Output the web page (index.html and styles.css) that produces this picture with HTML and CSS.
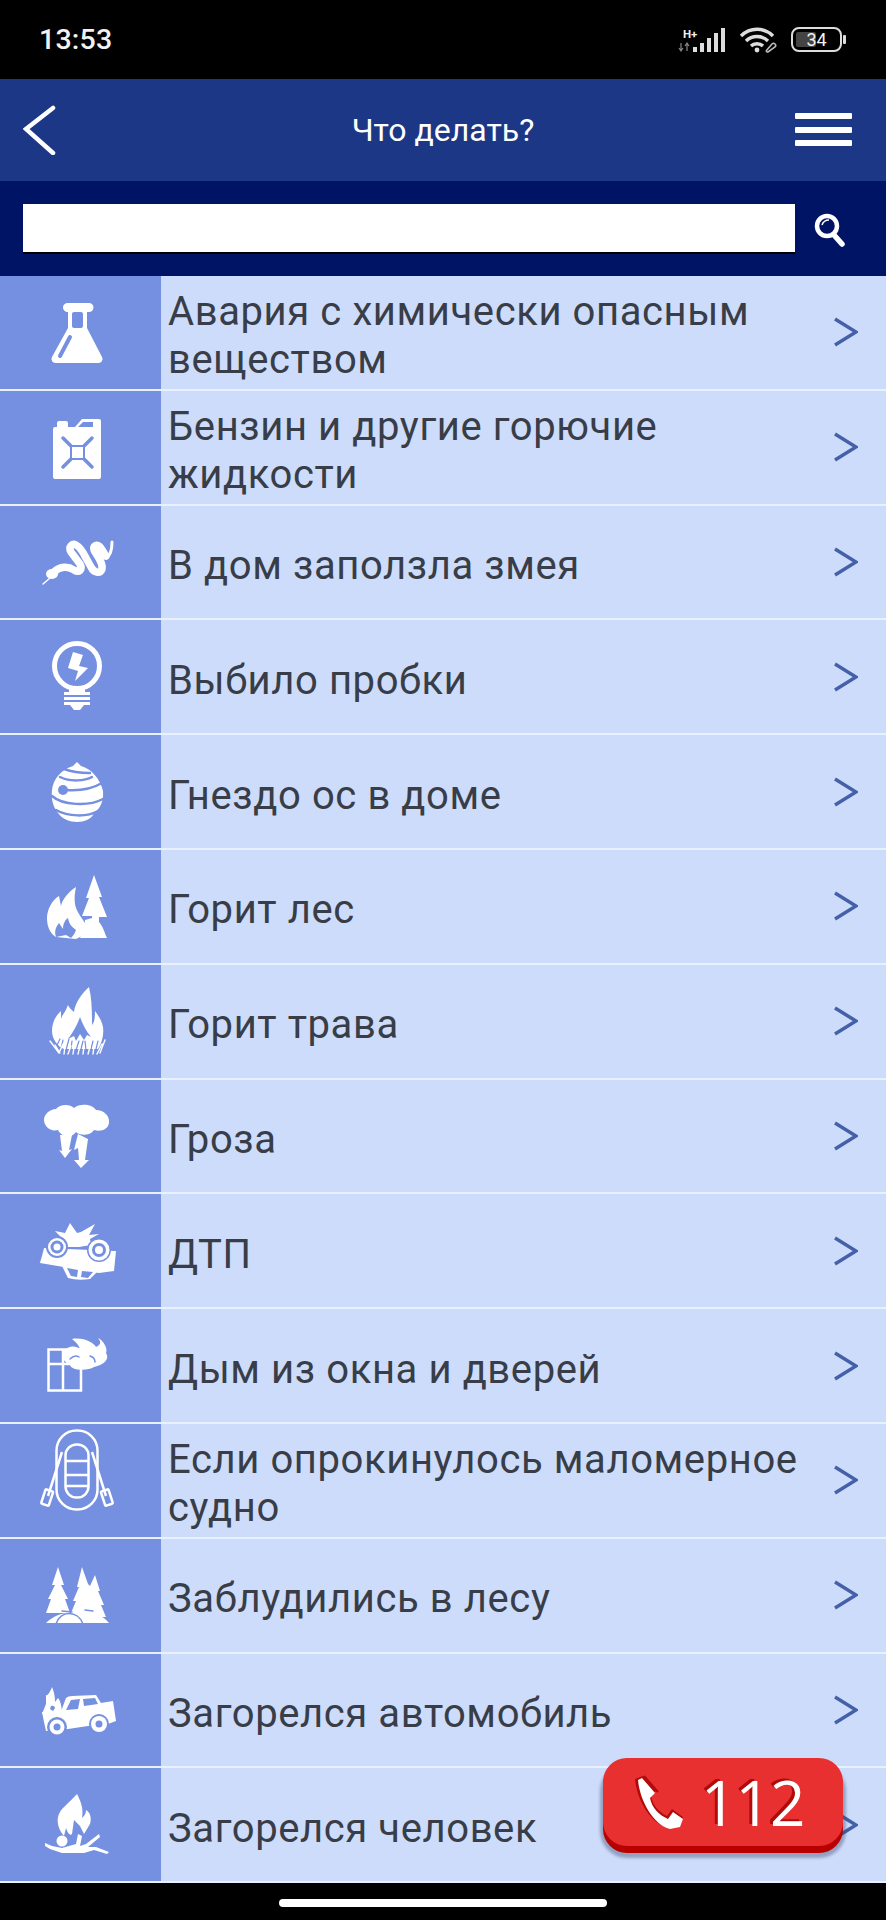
FILE: index.html
```html
<!DOCTYPE html>
<html lang="ru">
<head>
<meta charset="UTF-8">
<meta name="viewport" content="width=device-width,initial-scale=1">
<title>Что делать?</title>
<link rel="stylesheet" href="styles.css">
</head>
<body>
<div id="page">

<!-- status bar -->
<div class="statusbar">
  <span class="clock">13:53</span>
  <div class="status-icons">
    <svg class="ic-signal" width="50" height="26" viewBox="0 0 50 26">
      <text x="5" y="10.500" class="hplus">H+</text>
      <path class="thin" d="M3 16v8M1 21l2 3 2-3M9 24v-8M7 19l2-3 2 3"/>
      <path class="bar" d="M15 20h4v5h-4zM22 16h4v9h-4zM29 11h4v14h-4zM36 6h4v19h-4zM43 1h4v24h-4z"/>
    </svg>
    <svg class="ic-wifi" width="38" height="26" viewBox="0 0 38 26">
      <path class="wave" d="M2 9C11 0 25 0 34 9M7 14c6-6 16-6 22 0M12 19c3-3 9-3 12 0"/>
      <circle class="dot" cx="18" cy="23" r="2.400"/>
      <path class="link" d="M27 24l6-7a2 2 0 0 1 3 3l-7 5a2 2 0 0 1-2-1"/>
    </svg>
    <div class="battery"><span class="battery-fill"></span><span class="battery-num">34</span></div>
    <span class="battery-cap"></span>
  </div>
</div>

<!-- header -->
<div class="topbar">
  <svg class="back" width="34" height="50" viewBox="0 0 34 50"><path d="M30 3L3 24l27 24"/></svg>
  <h1>Что делать?</h1>
  <div class="burger"><i></i><i></i><i></i></div>
</div>

<!-- search -->
<div class="searchbar">
  <div class="searchbox"></div>
  <svg class="searchbtn" width="32" height="35" viewBox="0 0 32 35">
    <circle class="lens" cx="13" cy="13" r="10"/>
    <path class="lens-handle" d="M20 22l8 9"/>
    <path class="lens-shine" d="M8 12c1-3 3-5 7-5"/>
  </svg>
</div>

<!-- list -->
<div class="list">

  <div class="row">
    <div class="ico"><svg viewBox="0 0 160 115">
      <path class="w" d="M68 27h21a4.500 4.500 0 0 1 0 9h-2v16l15 29a4 4 0 0 1-4 6H56a4 4 0 0 1-4-6l16-29V36h-1a4.500 4.500 0 0 1 1-9z"/>
      <rect class="c" x="72" y="36" width="11" height="16" rx="2"/>
      <path class="cs" stroke-width="4" d="M70 61L60 80"/>
    </svg></div>
    <div class="txt">Авария с химически опасным веществом</div>
    <svg class="chev" viewBox="0 0 24 30"><path d="M1 2l21 13L1 28"/></svg>
  </div>

  <div class="row">
    <div class="ico"><svg viewBox="0 0 160 115">
      <path class="w" d="M55 36h20l7-8h17a2 2 0 0 1 2 2v56a2 2 0 0 1-2 2H55a2 2 0 0 1-2-2V38a2 2 0 0 1 2-2z"/>
      <rect class="w" x="57" y="30" width="11" height="8" rx="2"/>
      <path class="c" d="M78 36l5-5h10v5z"/>
      <path class="cs" stroke-width="3.500" d="M63 47l29 29M92 47L63 76"/>
      <rect class="c" x="70" y="54" width="15" height="15"/>
      <rect class="w" x="72" y="56" width="11" height="11"/>
    </svg></div>
    <div class="txt">Бензин и другие горючие жидкости</div>
    <svg class="chev" viewBox="0 0 24 30"><path d="M1 2l21 13L1 28"/></svg>
  </div>

  <div class="row">
    <div class="ico"><svg viewBox="0 0 160 115">
      <path class="ws" stroke-width="7.500" d="M54 66c6-6 14-6 20-2 5 3 9 0 6-6l-9-12c-3-5 1-9 5-7 4 2 7 7 10 13l5 9c3 6 9 7 11 2 1-5-3-11-7-17-3-5 0-8 4-6 3 2 5 8 7 10"/>
      <path class="ws" stroke-width="3" d="M106 50c4 1 6-6 6-14"/>
      <path class="ws" stroke-width="1.500" d="M50 72l-7 6"/>
      <ellipse class="w" cx="52" cy="68" rx="6" ry="5"/>
    </svg></div>
    <div class="txt">В дом заползла змея</div>
    <svg class="chev" viewBox="0 0 24 30"><path d="M1 2l21 13L1 28"/></svg>
  </div>

  <div class="row">
    <div class="ico"><svg viewBox="0 0 160 115">
      <circle class="cir" cx="77" cy="46" r="22.500"/>
      <path class="w" d="M69 66h16v6H69z"/>
      <path class="w" d="M64 72h26v3H64zM64 77h26v3H64zM64 82h26v3H64zM70 85h14l-4 5h-6z"/>
      <path class="w" d="M73 32l10 3-4 11 9 2-13 13 3-10-10-3z"/>
    </svg></div>
    <div class="txt">Выбило пробки</div>
    <svg class="chev" viewBox="0 0 24 30"><path d="M1 2l21 13L1 28"/></svg>
  </div>

  <div class="row">
    <div class="ico"><svg viewBox="0 0 160 115">
      <path class="w" d="M77 27l4 4c11 3 19 13 22 25 1 10-3 18-9 22-2 6-10 9-17 9s-15-3-19-9c-5-6-7-14-6-23 1-11 10-21 21-24z"/>
      <path class="cs" stroke-width="2.500" d="M64 34c8 3 18 4 26 4M60 42c10 5 25 4 32 0M66 55c14 1 26-1 36-7M52 61c10 9 36 11 51 3M56 75c12 7 32 7 42 1"/>
      <circle class="c" cx="63" cy="55" r="5"/>
    </svg></div>
    <div class="txt">Гнездо ос в доме</div>
    <svg class="chev" viewBox="0 0 24 30"><path d="M1 2l21 13L1 28"/></svg>
  </div>

  <div class="row">
    <div class="ico"><svg viewBox="0 0 160 115">
      <path class="w" d="M94 25l8 22h-3l8 20h-8v5c4 4 6 12 8 16H80c4-8 5-14 5-18l7-2v-2H82l7-18h-3z"/>
      <path class="w" d="M76 37c-8 5-14 13-15 19l-2-10c-7 4-12 14-12 22 0 10 4 16 9 19l20 2c6-2 10-7 11-12-3-7-11-15-12-23-1-6 0-12 1-17z"/>
      <path class="c" d="M56 87c-2-6 0-10 3-14l4 6c0-5 2-9 5-11 1 6 4 9 8 12-1 3-3 6-5 8l-5-3z"/>
    </svg></div>
    <div class="txt">Горит лес</div>
    <svg class="chev" viewBox="0 0 24 30"><path d="M1 2l21 13L1 28"/></svg>
  </div>

  <div class="row">
    <div class="ico"><svg viewBox="0 0 160 115">
      <path class="w" d="M89 22c-7 6-14 16-15 25-3-2-5-5-6-7-3 8-6 10-7 14v-8c-7 6-9 14-9 20 0 8 6 16 12 18h34c4-6 6-14 5-22-1-6-5-12-8-16 0 8-1 12-3 14 0-12 0-26-3-38z"/>
      <path class="c" d="M80 52c-2 6-6 14-12 22l6-3 2 5 4-7 4 6 3-5 4 2c-5-6-9-14-11-20z"/>
      <path class="cs" stroke-width="1.200" d="M56 82l4-8M61 84l2-9M66 85l3-11M71 84l1-8M76 85l3-9M81 84l2-8M86 85l-1-9M91 84l2-8M96 84l2-8"/>
      <path class="ws" stroke-width="1.400" d="M50 76l9 12M55 80l5 8M59 88l4-9M64 89l1-8M68 89l3-8M73 89l1-7M78 89l2-8M83 89l1-8M88 89l2-7M93 89l1-8M97 89l5-10M100 88l5-13"/>
    </svg></div>
    <div class="txt">Горит трава</div>
    <svg class="chev" viewBox="0 0 24 30"><path d="M1 2l21 13L1 28"/></svg>
  </div>

  <div class="row">
    <div class="ico"><svg viewBox="0 0 160 115">
      <path class="w" d="M56 29c4-5 14-5 18-1 6-5 18-4 22 2 8 0 14 6 13 13-1 7-9 9-15 7-4 6-14 6-18 2-4 6-14 6-18-2-8 2-14-4-14-10 0-6 6-11 12-11z"/>
      <path class="w" d="M60 55h12l-3 15 3-1-7 9-6-8 3 1zM78 54l10 5-3 21h4l-8 8-7-8h5l-1-12-4 2z"/>
    </svg></div>
    <div class="txt">Гроза</div>
    <svg class="chev" viewBox="0 0 24 30"><path d="M1 2l21 13L1 28"/></svg>
  </div>

  <div class="row">
    <div class="ico"><svg viewBox="0 0 160 115">
      <path class="w" d="M70 29l7 10 4-1 14-8-6 11 10-1-9 5 1 6-12 2-14 0-2-5-8-1 7-3-7-7 10 2z"/>
      <path class="w" d="M44 54l70 3h2l-2 20-15 2-59-10-1 3 3-10z"/>
      <path class="w" d="M62 72l6 12q10 3 22 1l10-10z"/>
      <path class="c" d="M67 74l4 8 6 1 1-7zM82 77l-1 6 7 1 5-6z"/>
      <circle class="c" cx="57" cy="53" r="11"/><circle class="w" cx="57" cy="53" r="9"/><circle class="c" cx="57" cy="53" r="6.500"/><circle class="w" cx="57" cy="53" r="3.500"/>
      <circle class="c" cx="99" cy="56" r="12"/><circle class="w" cx="99" cy="56" r="10.500"/><circle class="c" cx="99" cy="56" r="7"/><circle class="w" cx="99" cy="56" r="4"/>
    </svg></div>
    <div class="txt">ДТП</div>
    <svg class="chev" viewBox="0 0 24 30"><path d="M1 2l21 13L1 28"/></svg>
  </div>

  <div class="row">
    <div class="ico"><svg viewBox="0 0 160 115">
      <path class="frame" d="M48.500 40.500h32.500v41H48.500zM63 40v42M48 55h33"/>
      <path class="w" d="M62 45c4-9 14-9 18-5-2-6-6-8-8-10 12-2 22 4 24 8 4-2 6-4 2-9 6 3 10 11 8 15 4 6-2 12-12 14-6 4-22 4-24-2-4-2-8-6-8-11z"/>
      <path class="cs" stroke-width="1.500" d="M70 50c3-3 6-4 9-2M90 47c3 1 5 3 5 6"/>
    </svg></div>
    <div class="txt">Дым из окна и дверей</div>
    <svg class="chev" viewBox="0 0 24 30"><path d="M1 2l21 13L1 28"/></svg>
  </div>

  <div class="row">
    <div class="ico"><svg viewBox="0 0 160 115">
      <rect class="frame" x="56.500" y="6.500" width="41" height="79" rx="20"/>
      <rect class="frame" x="65.500" y="20.500" width="23" height="53" rx="11"/>
      <path class="frame" d="M66 37h22M66 51h22M66 62h22M62 28L48 72M92 28l14 44"/>
      <rect class="frame" x="-4" y="-8" width="8" height="15" rx="1" transform="translate(47 74) rotate(18)"/>
      <rect class="frame" x="-4" y="-8" width="8" height="15" rx="1" transform="translate(107 74) rotate(-18)"/>
    </svg></div>
    <div class="txt">Если опрокинулось маломерное судно</div>
    <svg class="chev" viewBox="0 0 24 30"><path d="M1 2l21 13L1 28"/></svg>
  </div>

  <div class="row">
    <div class="ico"><svg viewBox="0 0 160 115">
      <path class="w" d="M58 28l6 18h-3l7 14h-3l5 14H46l5-14h-3l7-14h-3z"/>
      <path class="w" d="M82 28l6 17 2 2 5-11 5 16h-2l6 14h-3l5 12H72l-1-4 5-12h-3l6-14h-2z"/>
      <path class="w" d="M46 84c6-6 14-10 24-10h20c8 0 16 6 19 10z"/>
      <path class="cs" stroke-width="1.500" d="M56 85c4-14 22-14 27 0M62 72l10 1M85 71l8 1"/>
    </svg></div>
    <div class="txt">Заблудились в лесу</div>
    <svg class="chev" viewBox="0 0 24 30"><path d="M1 2l21 13L1 28"/></svg>
  </div>

  <div class="row">
    <div class="ico"><svg viewBox="0 0 160 115">
      <path class="w" d="M52 33c-2 5-4 9-6 8v9l-4 10h20c0-8-2-14-4-16l-3 4c0-6-1-10-3-15z"/>
      <path class="w" d="M42 58l18 2 6-16q2-2 6-2l24-1 5 8 12-2 3 20-8 3-20 2-20 3-22 2-2-9z"/>
      <path class="c" d="M71 46l9-1-2 10-12 1zM83 45l12-1 3 6-14 2zM51 52a3 3 0 0 1 4 2l-2 3-3-2z"/>
      <circle class="c" cx="57" cy="73" r="10"/><circle class="w" cx="57" cy="73" r="7.500"/><circle class="c" cx="57" cy="73" r="3.500"/>
      <circle class="c" cx="99" cy="70" r="10"/><circle class="w" cx="99" cy="70" r="8"/><circle class="c" cx="99" cy="70" r="3.500"/>
    </svg></div>
    <div class="txt">Загорелся автомобиль</div>
    <svg class="chev" viewBox="0 0 24 30"><path d="M1 2l21 13L1 28"/></svg>
  </div>

  <div class="row">
    <div class="ico"><svg viewBox="0 0 160 115">
      <path class="w" d="M77 26c-5 6-15 14-17 18-4 6-3 16 4 24l2-8c2 6 4 8 6 6l2-14 6 6 4 8 6-10c2-6 0-12-4-14 0 4-2 6-4 8 2-10-2-18-5-24z"/>
      <circle class="w" cx="62" cy="73" r="5.500"/>
      <path class="w" d="M45 75l7 3 10 2 14-4 2-10 4 2-2 10 6-2 13-10 1 3-12 10h8l13 5-2 2-13-4-10 3H62l-12-4-5-3z"/>
    </svg></div>
    <div class="txt">Загорелся человек</div>
    <svg class="chev" viewBox="0 0 24 30"><path d="M1 2l21 13L1 28"/></svg>
  </div>

</div>

<div class="navbar"><span class="homepill"></span></div>

<!-- red call button over the list -->
<div class="call112">
  <svg class="phone" width="56" height="58" viewBox="0 0 56 58">
    <path class="ph-dark" d="M2 6l8-3 13 15-5 5c2 10 8 16 16 20l5-7 11 8-3 9-11 2C18 51 4 28 2 6z"/>
    <path class="ph-white" d="M5 7l4-2 13 15-5 5c2 10 9 17 18 21l5-7 10 7-3 8-10 2C21 52 7 29 5 7z"/>
    <path class="ph-slit" d="M11 3l14 16"/>
  </svg>
  <span class="num">112</span>
</div>

</div>
</body>
</html>
```

FILE: styles.css
```css
:root{
  --status:#000;--head:#1c3786;--search:#001466;
  --side:#7590e0;--cell:#cddcfb;--line:#e9f0ff;--ink:#383d47;--chev:#4460a8;
}
*{box-sizing:border-box;margin:0;padding:0}
html,body{background:#000}
body{font-family:Roboto,"Liberation Sans",sans-serif;overflow:hidden}
#page{position:relative;width:886px;height:1920px;display:flex;flex-direction:column;overflow:hidden}

/* status bar */
.statusbar{height:79px;background:var(--status);color:#fff;display:flex;align-items:center;
           justify-content:space-between;padding:0 40px 0 39px}
.clock{font-size:28.500px;font-weight:500;letter-spacing:.2px;color:#f2f2f2}
.status-icons{display:flex;align-items:center;color:#ddd}
.status-icons svg{display:block}
.ic-wifi{margin-left:11px}
.hplus{font:700 11.500px Roboto,sans-serif;fill:#eee}
.thin{fill:none;stroke:#888;stroke-width:1.200}
.bar{fill:#ddd}
.wave{fill:none;stroke:#ddd;stroke-width:3.400}
.dot{fill:#ddd}
.link{fill:none;stroke:#bbb;stroke-width:1.600}
.battery{position:relative;width:51px;height:25px;border:2.500px solid #ddd;border-radius:8px;
         margin-left:14px;display:flex;align-items:center;justify-content:center}
.battery-fill{position:absolute;left:3px;top:3px;bottom:3px;width:20px;background:#444;border-radius:2px}
.battery-num{position:relative;font-size:18px;color:#f2f2f2;line-height:1}
.battery-cap{width:3px;height:9px;background:#ddd;border-radius:1px;margin-left:1px}

/* header */
.topbar{height:102px;background:var(--head);display:flex;align-items:center;justify-content:center;position:relative}
.topbar h1{font-size:32px;font-weight:400;color:#fff}
.back{position:absolute;left:23px;top:26px}
.back path{fill:none;stroke:#fff;stroke-width:4.500;stroke-linecap:round}
.burger{position:absolute;right:34px;top:34px;width:57px;display:flex;flex-direction:column;gap:7.500px}
.burger i{display:block;height:6px;background:#fff;border-radius:1px}

/* search */
.searchbar{height:95px;background:var(--search);display:flex;align-items:center;padding:0 0 1px 23px}
.searchbox{width:772px;height:48px;background:#fff;box-shadow:0 2px 0 #000}
.searchbtn{margin-left:19px;margin-top:4px}
.lens{fill:none;stroke:#fff;stroke-width:4.500}
.lens-handle{fill:none;stroke:#fff;stroke-width:5.500;stroke-linecap:round}
.lens-shine{fill:none;stroke:#fff;stroke-width:1.500}

/* list */
.list{display:flex;flex-direction:column}
.row{height:114.800px;display:flex;align-items:center;background:var(--cell);border-bottom:2px solid var(--line)}
.ico{width:161px;height:100%;background:var(--side);flex:none}
.ico svg{display:block;width:160px;height:115px}
.txt{flex:1;padding:8px 20px 0 7px;font-size:40px;line-height:48px;color:var(--ink);letter-spacing:.6px}
.chev{width:24px;height:30px;flex:none;margin-right:28px}
.chev path{fill:none;stroke:var(--chev);stroke-width:3.500}

/* icon paint */
.w{fill:#fff}
.c{fill:var(--side)}
.cs{fill:none;stroke:var(--side);stroke-linecap:round}
.ws{fill:none;stroke:#fff;stroke-linecap:round;stroke-linejoin:round}
.cir{fill:none;stroke:#fff;stroke-width:5}
.frame{fill:none;stroke:#fff;stroke-width:2.500}

/* bottom */
.navbar{flex:1;background:#000;display:flex;justify-content:center;padding-top:16px}
.homepill{width:328px;height:8px;background:#fff;border-radius:4px}

.call112{position:absolute;left:603px;top:1758px;width:240px;height:88px;background:#e83030;border-radius:24px;
         box-shadow:0 7px 0 #b80000,0 9px 3px 3px rgba(60,70,110,.4);display:flex;align-items:center;padding-left:30px}
.phone{flex:none}
.ph-dark{fill:#b00a0a}
.ph-white{fill:#fff}
.ph-slit{fill:none;stroke:#b00a0a;stroke-width:2}
.num{font-family:"Open Sans",Roboto,sans-serif;font-size:62px;line-height:1;color:#fff;margin-left:12px;
     text-shadow:-3px -2px 0 #b00a0a;letter-spacing:-1px}
```
